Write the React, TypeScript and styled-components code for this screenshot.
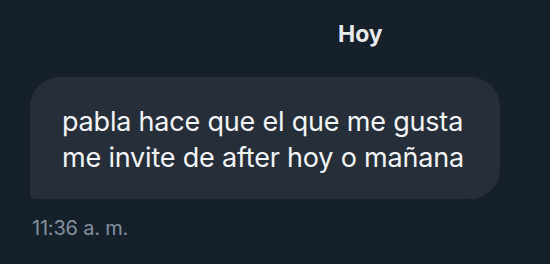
import React from "react";
import styled, { createGlobalStyle } from "styled-components";

const Global = createGlobalStyle`
  html, body { margin: 0; padding: 0; background: #16202a; }
  body { font-family: Inter, "Noto Sans", Roboto, sans-serif; }
`;

const Page = styled.div`
  width: 550px;
  height: 264px;
  background: #16202a;
  box-sizing: border-box;
  padding: 20px 0 0 30px;
  display: flex;
  flex-direction: column;
  overflow: hidden;
`;

const DayLabel = styled.div`
  align-self: flex-start;
  margin-left: 308px;
  font-size: 23px;
  font-weight: 700;
  line-height: 28px;
  color: #e7e9ea;
`;

const Bubble = styled.div`
  margin-top: 29px;
  width: 470px;
  height: 122px;
  box-sizing: border-box;
  padding: 27px 0 0 32px;
  background: #262f39;
  border-radius: 30px 30px 30px 5px;
`;

const MessageText = styled.div`
  font-size: 27px;
  line-height: 36px;
  color: #f2f4f5;
  letter-spacing: -0.2px;
`;

const Time = styled.div`
  margin-top: 17px;
  margin-left: 2px;
  font-size: 20px;
  line-height: 24px;
  letter-spacing: -0.2px;
  color: #8391a0;
`;

export default function App() {
  return (
    <>
      <Global />
      <Page>
        <DayLabel>Hoy</DayLabel>
        <Bubble>
          <MessageText>
            pabla hace que el que me gusta
            <br />
            me invite de after hoy o mañana
          </MessageText>
        </Bubble>
        <Time>11:36 a. m.</Time>
      </Page>
    </>
  );
}
